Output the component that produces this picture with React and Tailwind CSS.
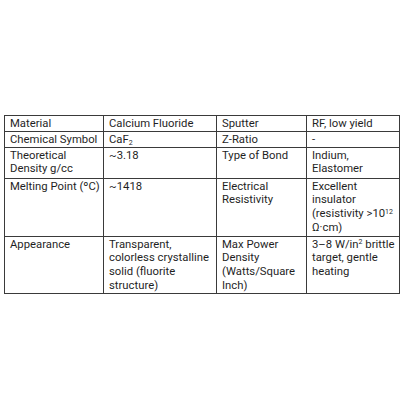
const SUP = 'text-[7px]';
const SUB = 'text-[7px]';

const ROWS = [
  ['Material', 'Calcium Fluoride', 'Sputter', 'RF, low yield'],
  ['Chemical Symbol', <>CaF<sub className={SUB}>2</sub></>, 'Z-Ratio', '-'],
  ['Theoretical Density g/cc', '~3.18', 'Type of Bond', 'Indium, Elastomer'],
  [
    'Melting Point (ºC)',
    '~1418',
    'Electrical Resistivity',
    <>Excellent insulator (resistivity &gt;10<sup className={SUP}>12</sup> Ω·cm)</>,
  ],
  [
    'Appearance',
    'Transparent, colorless crystalline solid (fluorite structure)',
    'Max Power Density (Watts/Square Inch)',
    <>3–8 W/in<sup className={SUP}>2</sup> brittle target, gentle heating</>,
  ],
];

const ROW_H = ['h-[16px]', 'h-[15px]', 'h-[31px]', 'h-[58px]', 'h-[57px]'];

export default function App() {
  return (
    <div className="w-[404px] h-[404px] bg-white pt-[115px] pl-[4px]">
      <table
        className="table-fixed border-collapse w-[395px] text-[11.3px] leading-[13.7px] text-[#1f1f1f]"
        style={{ fontFamily: 'Roboto, "Liberation Sans", Arial, sans-serif' }}
      >
        <colgroup>
          <col className="w-[99px]" />
          <col className="w-[113px]" />
          <col className="w-[90px]" />
          <col className="w-[93px]" />
        </colgroup>
        <tbody>
          {ROWS.map((row, i) => (
            <tr key={i} className={ROW_H[i]}>
              {row.map((cell, j) => (
                <td key={j} className="border border-[#3a3a3a] align-top pl-[5px] pr-[3px] pt-[1px] pb-0">
                  {cell}
                </td>
              ))}
            </tr>
          ))}
        </tbody>
      </table>
    </div>
  );
}
